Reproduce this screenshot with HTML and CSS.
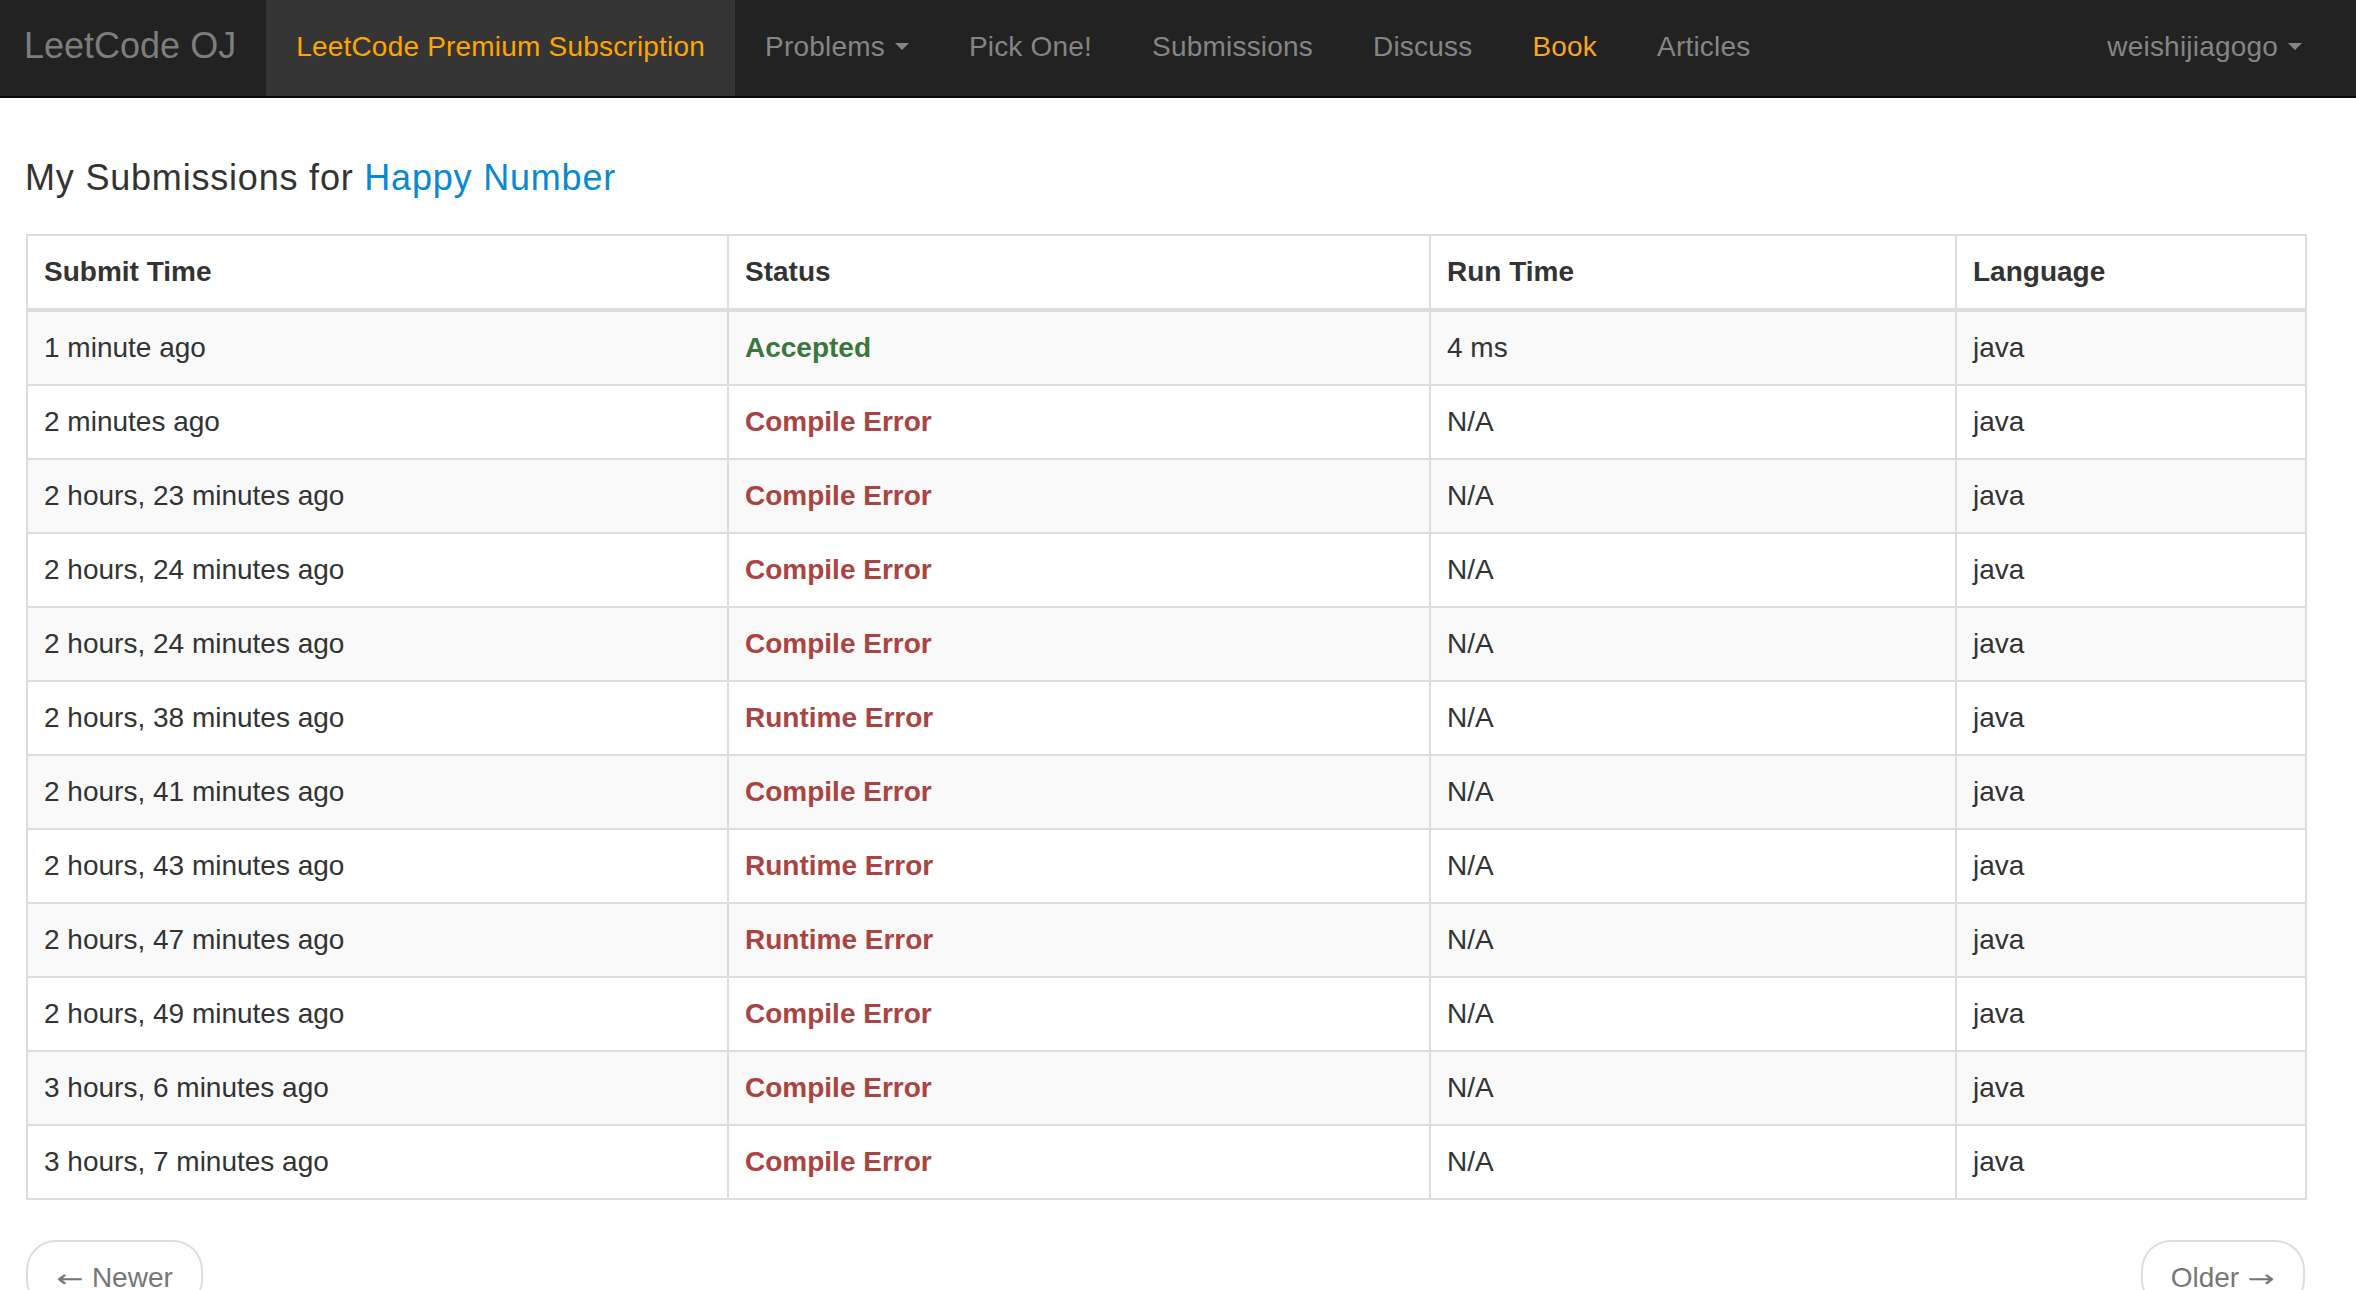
FILE: index.html
```html
<!DOCTYPE html>
<html lang="en">
<head>
<meta charset="utf-8">
<title>My Submissions - LeetCode OJ</title>
<link rel="stylesheet" href="styles.css">
</head>
<body>
<nav class="navbar">
  <a class="brand" href="#">LeetCode OJ</a>
  <a class="nav-link premium" href="#">LeetCode Premium Subscription</a>
  <a class="nav-link" href="#">Problems <span class="caret"></span></a>
  <a class="nav-link" href="#">Pick One!</a>
  <a class="nav-link" href="#">Submissions</a>
  <a class="nav-link" href="#">Discuss</a>
  <a class="nav-link book" href="#">Book</a>
  <a class="nav-link" href="#">Articles</a>
  <a class="nav-link user" href="#">weishijiagogo <span class="caret"></span></a>
</nav>

<main class="container">
  <h3 class="title">My Submissions for <a class="problem" href="#">Happy Number</a></h3>

  <table class="submissions">
    <colgroup>
      <col class="c1"><col class="c2"><col class="c3"><col class="c4">
    </colgroup>
    <thead>
      <tr><th>Submit Time</th><th>Status</th><th>Run Time</th><th>Language</th></tr>
    </thead>
    <tbody>
      <tr><td>1 minute ago</td><td class="ok">Accepted</td><td>4 ms</td><td>java</td></tr>
      <tr><td>2 minutes ago</td><td class="err">Compile Error</td><td>N/A</td><td>java</td></tr>
      <tr><td>2 hours, 23 minutes ago</td><td class="err">Compile Error</td><td>N/A</td><td>java</td></tr>
      <tr><td>2 hours, 24 minutes ago</td><td class="err">Compile Error</td><td>N/A</td><td>java</td></tr>
      <tr><td>2 hours, 24 minutes ago</td><td class="err">Compile Error</td><td>N/A</td><td>java</td></tr>
      <tr><td>2 hours, 38 minutes ago</td><td class="err">Runtime Error</td><td>N/A</td><td>java</td></tr>
      <tr><td>2 hours, 41 minutes ago</td><td class="err">Compile Error</td><td>N/A</td><td>java</td></tr>
      <tr><td>2 hours, 43 minutes ago</td><td class="err">Runtime Error</td><td>N/A</td><td>java</td></tr>
      <tr><td>2 hours, 47 minutes ago</td><td class="err">Runtime Error</td><td>N/A</td><td>java</td></tr>
      <tr><td>2 hours, 49 minutes ago</td><td class="err">Compile Error</td><td>N/A</td><td>java</td></tr>
      <tr><td>3 hours, 6 minutes ago</td><td class="err">Compile Error</td><td>N/A</td><td>java</td></tr>
      <tr><td>3 hours, 7 minutes ago</td><td class="err">Compile Error</td><td>N/A</td><td>java</td></tr>
    </tbody>
  </table>

  <ul class="pager">
    <li><a class="pager-btn newer" href="#"><span class="arrow">&larr;</span> Newer</a></li>
    <li><a class="pager-btn older" href="#">Older <span class="arrow">&rarr;</span></a></li>
  </ul>
</main>
</body>
</html>
```

FILE: styles.css
```css
html, body {
  margin: 0;
  padding: 0;
  background: #fff;
}

body {
  font-family: "Liberation Sans", Arial, Helvetica, sans-serif;
  font-size: 28px;
  line-height: 40px;
  color: #333;
  width: 2356px;
  overflow: hidden;
}

a {
  text-decoration: none;
}

/* ---------- navbar ---------- */
.navbar {
  display: flex;
  align-items: stretch;
  height: 96px;
  background: #222;
  border-bottom: 2px solid #080808;
  padding-right: 24px;
}

.brand {
  font-size: 36px;
  line-height: 40px;
  color: #7d7d7d;
  padding: 26px 30px 30px 24px;
}

.nav-link {
  color: #858585;
  font-size: 28px;
  line-height: 40px;
  letter-spacing: 0.2px;
  padding: 27px 30px 29px;
  white-space: nowrap;
}

.nav-link.premium {
  background: #353535;
  color: #ffa500;
}

.nav-link.book {
  color: #f5a623;
}

.nav-link.user {
  margin-left: auto;
}

.caret {
  display: inline-block;
  width: 0;
  height: 0;
  margin-left: 2px;
  vertical-align: middle;
  border-top: 7px solid #858585;
  border-left: 7px solid transparent;
  border-right: 7px solid transparent;
  position: relative;
  top: -2px;
}

/* ---------- content ---------- */
.container {
  padding-left: 26px;
}

.title {
  margin: 60px 0 36px -1px;
  font-size: 36px;
  line-height: 40px;
  font-weight: normal;
  letter-spacing: 0.8px;
  color: #333;
}

.problem {
  color: #0a88d0;
}

.submissions {
  width: 2279px;
  table-layout: fixed;
  border-collapse: collapse;
  border: 2px solid #ddd;
}

.c1 { width: 701px; }
.c2 { width: 702px; }
.c3 { width: 526px; }
.c4 { width: 350px; }

.submissions th,
.submissions td {
  border: 2px solid #ddd;
  padding: 16px 16px;
  text-align: left;
  vertical-align: top;
  line-height: 40px;
  white-space: nowrap;
}

.submissions th {
  font-weight: bold;
  border-bottom: 4px solid #ddd;
  background: #fff;
}

.submissions tbody tr:nth-child(odd) td {
  background: #f9f9f9;
}

.submissions td.ok {
  color: #3c763d;
  font-weight: bold;
}

.submissions td.err {
  color: #a94442;
  font-weight: bold;
}

/* ---------- pager ---------- */
.pager {
  list-style: none;
  margin: 40px 0;
  padding: 0;
  width: 2279px;
  display: flex;
  justify-content: space-between;
}

.pager-btn {
  display: inline-block;
  border: 2px solid #ddd;
  border-radius: 30px;
  background: #fff;
  color: #777;
  line-height: 40px;
  padding: 16px 28px 9px;
}

.arrow {
  display: inline-block;
  font-family: "DejaVu Sans", sans-serif;
  font-size: 24px;
  line-height: 40px;
  transform: scaleX(1.35);
  margin: 0 4px;
}
```
